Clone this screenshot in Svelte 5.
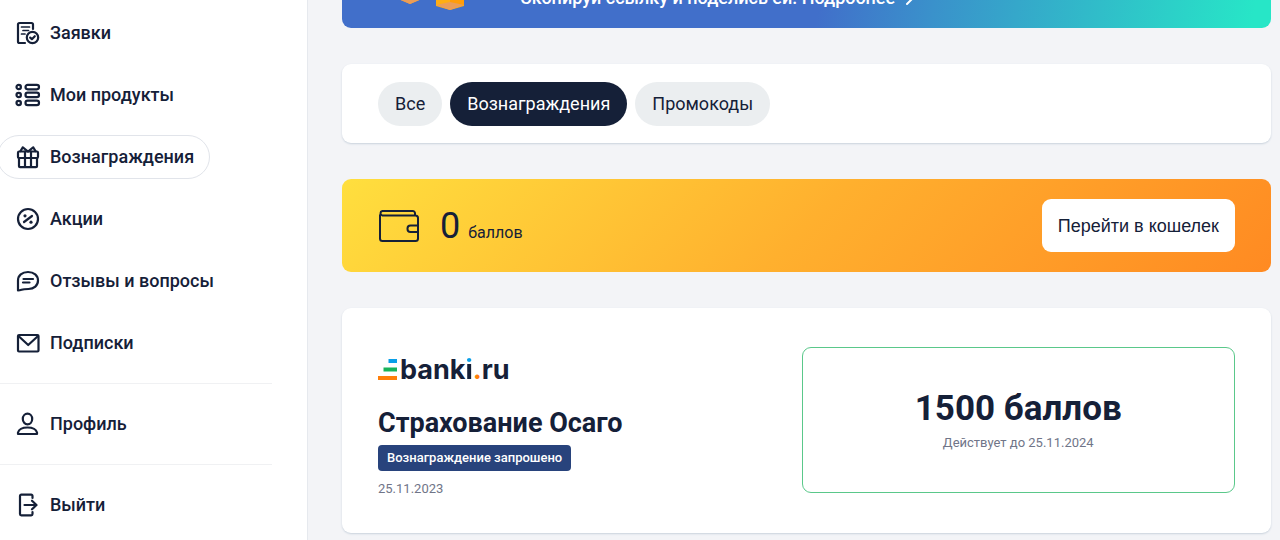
<script>
  const mainLinks = [
    { id: 'requests', label: 'Заявки' },
    { id: 'products', label: 'Мои продукты' },
    { id: 'rewards', label: 'Вознаграждения' },
    { id: 'promo', label: 'Акции' },
    { id: 'reviews', label: 'Отзывы и вопросы' },
    { id: 'subs', label: 'Подписки' },
  ];
  const groups = [mainLinks, [{ id: 'profile', label: 'Профиль' }], [{ id: 'exit', label: 'Выйти' }]];
  const filters = ['Все', 'Вознаграждения', 'Промокоды'];

  let current = $state('rewards');
  let filter = $state('Вознаграждения');
</script>

{#snippet icon(id)}
  <svg class="icon" viewBox="0 0 24 24" aria-hidden="true">
    {#if id === 'requests'}
      <path d="M17 8V3.5A1.5 1.5 0 0 0 15.500 2h-12A1.500 1.500 0 0 0 2 3.500v17A1.500 1.500 0 0 0 3.500 22H9" />
      <path d="M5.500 6h8M7 9.500h5.500M5.500 13H9" stroke-width="1.700" />
      <circle cx="16.500" cy="16.500" r="5.700" />
      <path d="M14.200 16.600l1.700 1.600 2.900-3" />
    {:else if id === 'products'}
      <circle cx="2.700" cy="4" r="2.200" /><circle cx="2.700" cy="12" r="2.200" /><circle cx="2.700" cy="20" r="2.200" />
      <rect x="9.500" y="1.800" width="13.500" height="4.500" rx="2.200" />
      <rect x="9.500" y="9.700" width="13.500" height="4.500" rx="2.200" />
      <rect x="9.500" y="17.600" width="13.500" height="4.500" rx="2.200" />
    {:else if id === 'rewards'}
      <rect x="2" y="6.500" width="20" height="6.500" rx="1.200" />
      <path d="M3 13v8.200a1 1 0 0 0 1 1h16a1 1 0 0 0 1-1V13M9 6.500V22M15 6.500V22" />
      <path d="M12 6.500L6.800 2.300 4.500 6M12 6.500l5.200-4.200L19.500 6" />
    {:else if id === 'promo'}
      <circle cx="12" cy="12" r="10" />
      <path d="M8 15l8-6" />
      <circle class="dot" cx="9" cy="8.800" r="1.600" /><circle class="dot" cx="15" cy="15.200" r="1.600" />
    {:else if id === 'reviews'}
      <path d="M2 21.500V11.500C2 6.500 6 3 12 3s10 3.500 10 8.500S18 20 12.500 20C9 20 7.500 20 5.500 20.800 4.500 21.200 3 21.500 2 21.500z" />
      <path d="M7.500 10h9.500M7 13.500h6.500" />
    {:else if id === 'subs'}
      <rect x="2" y="4" width="20.500" height="16.500" rx="1" />
      <path d="M3 5.500l9.200 8.500 9.300-8.500" />
    {:else if id === 'profile'}
      <ellipse cx="11.500" cy="7" rx="4.700" ry="5.300" />
      <path d="M2 22v-1.500c1-3.300 4.500-5 9.500-5s8.500 1.700 9.500 5V22z" />
    {:else}
      <path d="M16.500 5V3a1.300 1.300 0 0 0-1.300-1.300H5.300A1.300 1.300 0 0 0 4 3v18a1.300 1.300 0 0 0 1.300 1.300h9.900a1.300 1.300 0 0 0 1.300-1.300v-2" />
      <path d="M8.500 12H20M16 7.700l4.500 4.300-4.500 4.300" />
    {/if}
  </svg>
{/snippet}

<div class="page">
  <aside class="sidebar">
    <nav aria-label="Меню">
      {#each groups as links, i}
        {#if i > 0}<hr />{/if}
        {#each links as link}
          <a
            href={'#' + link.id}
            class="link"
            class:active={current === link.id}
            onclick={() => (current = link.id)}
          >
            {@render icon(link.id)}
            <span>{link.label}</span>
          </a>
        {/each}
      {/each}
    </nav>
  </aside>

  <main>
    <section class="banner">
      <svg class="coins" viewBox="0 0 78 60" aria-hidden="true">
        <path d="M2 20l14-8 14 8v28l-14 6-14-6z" fill="#ffa51f" />
        <path d="M2 48l14-4 14 4-14 6z" fill="#eb9d57" />
        <path d="M42 20l14-8 14 8v36l-14 4-14-4z" fill="#ffae12" />
        <path d="M56 12l14 8v35l-14 3z" fill="#ff9d0a" />
        <path d="M42 55l14-3 14 3-14 5z" fill="#eb9d57" />
      </svg>
      <a href="#invite">
        Скопируй ссылку и поделись ей. Подробнее
        <svg class="arrow" viewBox="0 0 20 20" aria-hidden="true"><path d="M3 10h13M10 4l6 6-6 6" /></svg>
      </a>
    </section>

    <section class="card filters">
      {#each filters as name}
        <button type="button" class:chosen={filter === name} onclick={() => (filter = name)}>{name}</button>
      {/each}
    </section>

    <section class="wallet">
      <svg class="purse" viewBox="0 0 42 34" aria-hidden="true">
        <path d="M2 6v23.500A2.500 2.500 0 0 0 4.500 32h33a2.500 2.500 0 0 0 2.500-2.500V9a2.500 2.500 0 0 0-2.500-2.500H4.300A2.300 2.300 0 0 1 4.300 2H34.500A2.300 2.300 0 0 1 37 4.500v2" />
        <path d="M40 16.500h-7.500a3 3 0 0 0-3 3v.5a3 3 0 0 0 3 3H40" />
      </svg>
      <p><strong>0</strong> <span>баллов</span></p>
      <button type="button">Перейти в кошелек</button>
    </section>

    <section class="card reward">
      <div class="info">
        <div class="logo">
          <svg viewBox="0 0 19 21" aria-hidden="true">
            <path d="M10.500 0H19v4h-8.500z" fill="#099fe8" />
            <path d="M5.500 8.500H19v4H5.500z" fill="#17b35b" />
            <path d="M0 17h19v4H0z" fill="#ff7f0a" />
          </svg>
          <span>bank<span class="tip">i</span><span class="point">.</span>ru</span>
        </div>
        <h2>Страхование Осаго</h2>
        <span class="badge">Вознаграждение запрошено</span>
        <time datetime="2023-11-25">25.11.2023</time>
      </div>
      <div class="amount">
        <strong>1500 баллов</strong>
        <span>Действует до 25.11.2024</span>
      </div>
    </section>
  </main>
</div>

<style>
  :global(body) {
    background: #f3f4f7;
  }
  .page {
    display: flex;
    min-height: 100vh;
    overflow: hidden;
    color: #152038;
    font-family: Roboto, sans-serif;
    font-size: 18px;
    line-height: 24px;
  }
  .sidebar {
    flex: 0 0 308px;
    box-sizing: border-box;
    padding: 11px 35px 0 0;
    background: #fff;
    border-right: 1px solid #e6e9ee;
  }
  nav {
    display: flex;
    flex-direction: column;
    align-items: flex-start;
    gap: 18px;
  }
  hr {
    width: 100%;
    height: 1px;
    margin: 0;
    border: 0;
    background: #f0f1f3;
  }
  .link {
    display: flex;
    align-items: center;
    gap: 10px;
    height: 44px;
    box-sizing: border-box;
    margin-left: -3px;
    padding: 0 15px 0 18px;
    border: 1px solid transparent;
    border-radius: 22px;
    color: inherit;
    font-weight: 500;
    text-decoration: none;
    white-space: nowrap;
  }
  .active {
    border-color: #e1e4ea;
  }
  .icon {
    width: 24px;
    height: 24px;
    flex: none;
    overflow: visible;
  }
  .icon,
  .arrow,
  .purse {
    fill: none;
    stroke: currentColor;
    stroke-width: 2;
    stroke-linecap: round;
    stroke-linejoin: round;
  }
  .icon {
    stroke-width: 2.2;
  }
  .dot {
    fill: currentColor;
    stroke: none;
  }
  main {
    flex: 1;
    min-width: 0;
    display: flex;
    flex-direction: column;
    gap: 36px;
    padding: 0 9px 0 34px;
  }
  .banner {
    display: flex;
    align-items: flex-end;
    gap: 48px;
    height: 124px;
    box-sizing: border-box;
    margin-top: -96px;
    padding: 0 52px 18px;
    border-radius: 9px;
    background: linear-gradient(100deg, #416fca 52%, #3a91cb 64%, #27e6c7 98%);
    color: #fff;
  }
  .coins {
    width: 78px;
    height: 60px;
  }
  .banner a {
    display: flex;
    align-items: center;
    gap: 2px;
    color: inherit;
    font-weight: 500;
    text-decoration: none;
  }
  .arrow {
    width: 20px;
    height: 20px;
  }
  .card {
    border-radius: 9px;
    background: #fff;
    box-shadow: 0 1px 2px #c9d2dc;
  }
  button {
    border: 0;
    color: inherit;
    font-size: 18px;
    line-height: 24px;
    cursor: pointer;
  }
  .filters {
    display: flex;
    gap: 8px;
    padding: 18px 36px 17px;
  }
  .filters button {
    height: 44px;
    padding: 0 17px;
    border-radius: 22px;
    background: #ebeef0;
    font-family: inherit;
  }
  .filters .chosen {
    background: #152038;
    color: #fff;
  }
  .wallet {
    display: flex;
    align-items: center;
    padding: 20px 36px;
    border-radius: 9px;
    background: linear-gradient(135deg, #ffdf3e, #ffb02e 50%, #ff8a22);
  }
  .purse {
    width: 42px;
    height: 34px;
    margin-right: 20px;
  }
  .wallet p {
    margin: 0;
    flex: 1;
    padding-top: 8px;
    font-size: 16px;
    line-height: 36px;
  }
  .wallet strong {
    margin-right: 4px;
    font-size: 36px;
    font-weight: 400;
  }
  .wallet button {
    height: 53px;
    padding: 0 16px;
    border-radius: 9px;
    background: #fff;
    font-family: "Liberation Sans", sans-serif;
  }
  .reward {
    display: grid;
    grid-template-columns: 424fr 434fr;
    align-items: start;
    padding: 39px 36px 34px;
  }
  .info {
    display: flex;
    flex-direction: column;
    align-items: flex-start;
    padding-top: 12px;
  }
  .logo {
    display: flex;
    gap: 3px;
    height: 22px;
    font-family: Inter, sans-serif;
    font-size: 27px;
    font-weight: 700;
    line-height: 22px;
  }
  .logo svg {
    width: 19px;
    height: 21px;
  }
  .tip {
    background: linear-gradient(#099fe8 11px, #152038 11px);
    background-clip: text;
    color: transparent;
  }
  .point {
    color: #ff7f0a;
  }
  h2 {
    margin: 25px 0 5px;
    font-size: 27px;
    font-weight: 700;
    line-height: 34px;
  }
  .badge {
    padding: 3px 9px;
    border-radius: 4px;
    background: #28437c;
    color: #fff;
    font-size: 13px;
    font-weight: 500;
    line-height: 20px;
  }
  time {
    margin-top: 8px;
  }
  time,
  .amount span {
    color: #707588;
    font-size: 13px;
    line-height: 20px;
  }
  .amount {
    display: flex;
    flex-direction: column;
    align-items: center;
    justify-content: center;
    gap: 2px;
    min-height: 144px;
    border: 1px solid #5ac88a;
    border-radius: 9px;
  }
  .amount strong {
    font-size: 35px;
    font-weight: 700;
    line-height: 44px;
  }
</style>
